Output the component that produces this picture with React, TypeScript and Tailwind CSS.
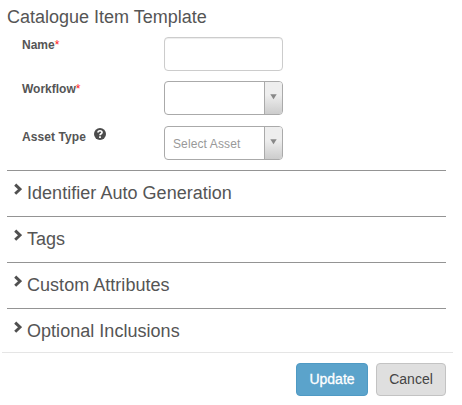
import React from "react";

const sections = [
  "Identifier Auto Generation",
  "Tags",
  "Custom Attributes",
  "Optional Inclusions",
];

export default function App() {
  return (
    <div className="h-[405px] w-[462px] overflow-hidden bg-white font-['Liberation_Sans',Arial,sans-serif] text-[#555]">
      <h1 className="pl-[7px] pt-[7px] text-lg leading-5">
        Catalogue Item Template
      </h1>

      <form className="mt-2.5 flex flex-col pl-[22px]">
        <div className="flex h-11">
          <FieldLabel text="Name" required />
          <input
            type="text"
            aria-label="Name"
            className="h-[34px] w-[119px] rounded border border-[#ccc] px-3 text-sm shadow-[inset_0_1px_1px_rgba(0,0,0,0.075)] outline-none"
          />
        </div>
        <div className="flex h-[45px]">
          <FieldLabel text="Workflow" required />
          <SelectBox />
        </div>
        <div className="flex h-11">
          <div className="flex w-[142px] pt-[3px]">
            <span className="text-xs font-bold leading-4 tracking-[0.08px]">
              Asset Type
            </span>
            <HelpIcon />
          </div>
          <SelectBox placeholder="Select Asset" />
        </div>
      </form>

      <div className="ml-[7px] w-[439px]">
        {sections.map((title) => (
          <div
            key={title}
            className="flex h-[46px] border-t border-[#949494] pl-[7px] pt-3"
          >
            <ChevronIcon />
            <h2 className="ml-[5px] text-lg leading-5 tracking-[0.03px]">
              {title}
            </h2>
          </div>
        ))}
      </div>

      {/* footer */}
      <div className="-mt-0.5 ml-0.5 flex w-[451px] justify-end gap-2 border-t border-[#e5e5e5] pr-[7px] pt-2.5">
        <button className="h-[33px] w-[72px] rounded border border-[#4f9ac4] bg-[#5ba3cb] pb-0.5 text-sm text-white [-webkit-text-stroke:0.3px_white]">
          Update
        </button>
        <button className="h-[33px] w-[70px] rounded border border-[#c3c3c3] bg-[#dfdfdf] pb-0.5 text-sm text-[#444]">
          Cancel
        </button>
      </div>
    </div>
  );
}

function FieldLabel({ text, required }: { text: string; required?: boolean }) {
  return (
    <label className="w-[142px] text-xs font-bold leading-4">
      {text}
      {required && <span className="font-normal text-[#ff1a1a]">*</span>}
    </label>
  );
}

function SelectBox({ placeholder }: { placeholder?: string }) {
  return (
    <div className="flex h-[34px] w-[119px] overflow-hidden rounded border border-[#aaa]">
      <div className="flex-1 pl-2 pt-[9px] text-xs leading-4 tracking-[0.12px] text-[#999]">
        {placeholder}
      </div>
      <div className="flex w-[18px] justify-center border-l border-[#aaa] bg-linear-to-t from-[#ccc] to-[#eee] to-60% pt-3">
        <svg width="7" height="6" viewBox="0 0 7 6">
          <path d="M0.3 0.3h6.4L3.5 5.3z" fill="#888" />
        </svg>
      </div>
    </div>
  );
}

function HelpIcon() {
  return (
    <svg
      className="-mt-px ml-2"
      width="12"
      height="12"
      viewBox="0 0 12 12"
      fill="none"
    >
      <circle cx="6" cy="6" r="6" fill="#4c4c4c" />
      <path
        d="M4 4.6C4 2.2 8 2.2 8 4.4C8 5.8 6 5.6 6 7.2"
        stroke="#fff"
        strokeWidth="1.7"
      />
      <path d="M5.1 8.2h1.8V10H5.1z" fill="#fff" />
    </svg>
  );
}

function ChevronIcon() {
  return (
    <svg width="8" height="12" viewBox="0 0 8 12" fill="none">
      <path d="M1.2 1.6L6 6.2L1.2 10.8" stroke="#505050" strokeWidth="2.9" />
    </svg>
  );
}
